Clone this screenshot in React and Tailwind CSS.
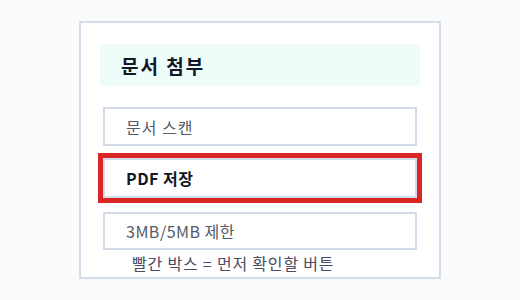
export default function App() {
  const font = { fontFamily: '"Noto Sans CJK KR", "Noto Sans", sans-serif' };
  return (
    <div className="w-[520px] h-[300px] bg-[#f8fafc] flex justify-center pt-[21px]" style={font}>
      <div className="w-[362px] h-[258px] border-2 border-[#d3dbe8] bg-white px-[19px] pt-[21px] flex flex-col">
        <div className="h-[42px] bg-[#effdfa] flex items-center pl-[21px]">
          <span className="text-[19px] font-bold leading-none tracking-[2px] text-[#111827]">문서 첨부</span>
        </div>
        <div className="mx-[3px] mt-[21px] h-[39px] border-2 border-[#d3dbe8] flex items-center pl-[21px] text-[16px] tracking-[1px] text-[#555a66]">
          문서 스캔
        </div>
        <div className="mx-[3px] mt-[12px] h-[40px] border-2 border-[#d3dbe8] outline-[5px] outline-solid outline-[#dc2626] flex items-center pl-[21px] text-[16px] tracking-[0.5px] font-bold text-[#111827]">
          PDF 저장
        </div>
        <div className="mx-[3px] mt-[14px] h-[38px] border-2 border-[#d3dbe8] flex items-center pl-[21px] text-[16px] tracking-[0.5px] text-[#555a66]">
          3MB/5MB 제한
        </div>
        <div className="mt-[3px] pl-[32px] text-[16px] leading-[20px] tracking-[0.8px] text-[#4b4b63]">
          빨간 박스 = 먼저 확인할 버튼
        </div>
      </div>
    </div>
  );
}
